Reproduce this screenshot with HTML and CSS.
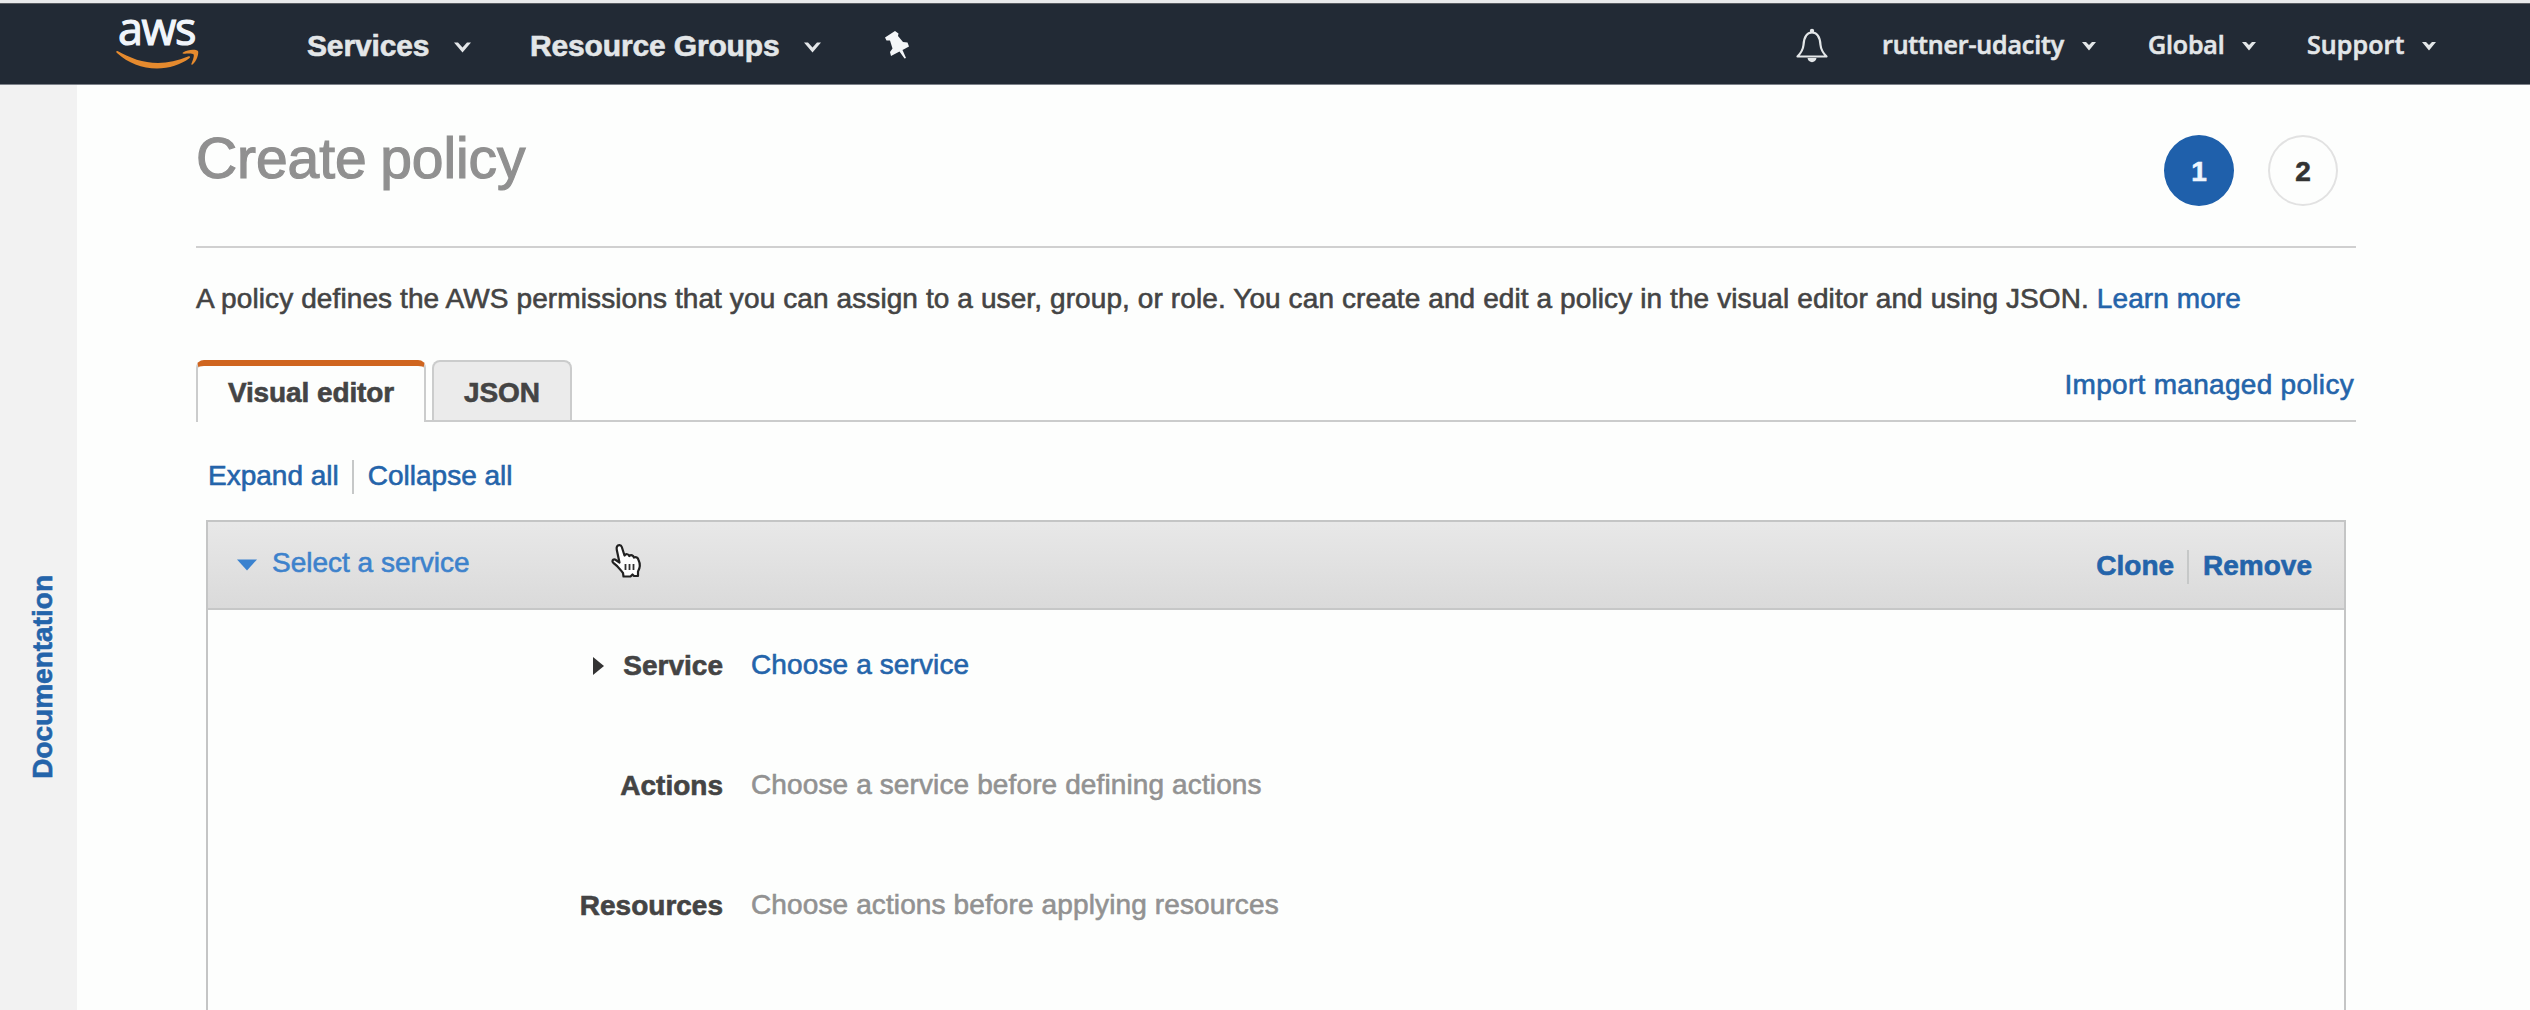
FILE: index.html
```html
<!DOCTYPE html>
<html lang="en">
<head>
<meta charset="utf-8">
<title>Create policy</title>
<link rel="stylesheet" href="styles.css">
</head>
<body>
<header class="topbar">
  <a class="logo">
    <span class="logo-text">aws</span>
    <svg class="smile" width="84" height="22" viewBox="0 0 84 22"><path d="M1.500 2C0 1.500 0 3 1 4C12 14 26 19.500 41 19.500C53 19.500 65 15.500 73 9.500C75 8 74 6.500 72 7.500C62 11.500 52 14 42 14C27 14 14 9 1.500 2Z"/><path d="M67 3.500C72 0 80 0 82 2C83 4 81 12 76.500 15.500C75.500 16 75 15.500 75.500 14.500C77 11 78.500 6.500 77.500 5.200C76.500 4 71 4.400 68 4.700C66.500 4.800 66 4.200 67 3.500Z"/></svg>
  </a>
  <nav class="nav-main">
    <a class="menu services">Services<svg class="chev" width="19" height="12" viewBox="0 0 19 12"><path d="M1 1.500H5L9.500 6.500L14 1.500H18L9.500 11.500Z"/></svg></a>
    <a class="menu groups">Resource Groups<svg class="chev" width="19" height="12" viewBox="0 0 19 12"><path d="M1 1.500H5L9.500 6.500L14 1.500H18L9.500 11.500Z"/></svg></a>
    <svg class="pin" width="26" height="30" viewBox="0 0 26 30"><path d="M1 7.500L11 1L14.500 3.500L14 6L19 12L23.500 12.500L25 16.500L18.500 20L22 28L20.500 28.500L15.500 21.500L7 26L6 22L8.500 18.500L6 10.500L2.500 10.500Z"/></svg>
  </nav>
  <nav class="nav-side">
    <svg class="bell" width="34" height="36" viewBox="0 0 34 36"><path class="bell-line" d="M2.500 28.500C6 25 8 22 8.500 17C9 9 11 4.500 17 4.500C23 4.500 25 9 25.500 17C26 22 28 25 31.500 28.500Z"/><circle cx="17" cy="3" r="2.200"/><path d="M12.500 30H21.500C21 35.500 13 35.500 12.500 30Z"/></svg>
    <a class="menu user">ruttner-udacity<svg class="tri" width="14" height="10" viewBox="0 0 14 10"><path d="M0 1H4L7 4L10 1H14L7 9.500Z"/></svg></a>
    <a class="menu region">Global<svg class="tri" width="14" height="10" viewBox="0 0 14 10"><path d="M0 1H4L7 4L10 1H14L7 9.500Z"/></svg></a>
    <a class="menu support">Support<svg class="tri" width="14" height="10" viewBox="0 0 14 10"><path d="M0 1H4L7 4L10 1H14L7 9.500Z"/></svg></a>
  </nav>
</header>
<div class="page">
  <aside class="docs"><a class="docs-link">Documentation</a></aside>
  <main class="content">
    <div class="heading">
      <h1>Create policy</h1>
      <ol class="steps"><li class="step current">1</li><li class="step">2</li></ol>
    </div>
    <p class="intro">A policy defines the AWS permissions that you can assign to a user, group, or role. You can create and edit a policy in the visual editor and using JSON. <a>Learn more</a></p>
    <div class="tabs">
      <a class="tab active">Visual editor</a>
      <a class="tab">JSON</a>
      <a class="import">Import managed policy</a>
    </div>
    <div class="tools"><a>Expand all</a><i class="sep"></i><a>Collapse all</a></div>
    <section class="panel">
      <div class="panel-head">
        <svg class="open" width="20" height="12" viewBox="0 0 20 12"><path d="M0 .5H20L10 11.500Z"/></svg>
        <a class="panel-title">Select a service</a>
        <div class="panel-actions"><a>Clone</a><i class="sep"></i><a>Remove</a></div>
        <svg class="cursor" width="34" height="36" viewBox="0 0 34 36"><path class="hand" d="M8 3.500C9 1.500 12 1.500 12.800 4L15.500 12.500C17 10.500 19.500 11 20.300 13C22 11.500 24.200 12.300 25 14.500C27 13.500 29 14.500 29.500 17C31.500 21 31 25 29 28.500V33H25L23.500 31.500L21.500 33.500H14.500L14 30C11.500 27 9 23 4.500 20C2.500 18.500 3.500 16 6 16.500L10.500 19.500L7.800 7C7.500 5.500 7.500 4.500 8 3.500Z"/><path class="fingers" d="M16.500 21V27M20.500 21V27M24.500 21V27"/></svg>
      </div>
      <dl class="fields">
        <dt><svg class="closed" width="11" height="18" viewBox="0 0 11 18"><path d="M0 0L11 9L0 18Z"/></svg>Service</dt><dd><a>Choose a service</a></dd>
        <dt>Actions</dt><dd>Choose a service before defining actions</dd>
        <dt>Resources</dt><dd>Choose actions before applying resources</dd>
      </dl>
    </section>
  </main>
</div>
</body>
</html>
```
FILE: styles.css
```css
* { box-sizing: border-box; }
body {
  margin: 0;
  height: 1010px;
  overflow: hidden;
  background: #fdfefd;
  color: #444;
  font: 28px/32px "Liberation Sans", Arial, sans-serif;
  -webkit-text-stroke: 0.6px currentColor;
}
a { color: #2464aa; }
h1, p, ol, dl, dd { margin: 0; padding: 0; }
svg { display: block; flex: none; }

.topbar {
  height: 85px;
  padding: 0 94px 0 116px;
  display: flex;
  background: #222a35;
  border-top: 3px solid #e9eaeb;
  border-bottom: 1px solid #7d828a;
  box-shadow: inset 0 1px #5a5d62;
}
.logo { width: 191px; padding-top: 4px; color: #f1f5fb; }
.logo-text {
  display: block;
  margin-left: 2px;
  height: 42px;
  font: 45px/42px "Open Sans", sans-serif;
  letter-spacing: -1.5px;
  -webkit-text-stroke: 1.2px currentColor;
}
.smile { fill: #e58a2e; }
.nav-main, .nav-side { display: flex; color: #e3e6e8; fill: #e3e6e8; }
.nav-main { font-size: 30px; font-weight: bold; letter-spacing: -0.15px; }
.nav-side {
  margin-left: auto;
  font-family: "Open Sans", sans-serif;
  font-size: 25px;
  font-weight: 600;
  letter-spacing: -0.15px;
}
.menu {
  display: flex;
  justify-content: space-between;
  align-items: flex-start;
  color: inherit;
  white-space: nowrap;
}
.nav-main .menu { padding-top: 27px; }
.nav-side .menu { padding-top: 25px; }
.services { width: 165px; margin-right: 58px; }
.groups { width: 292px; margin-right: 62px; }
.user { width: 214px; margin-right: 52px; }
.region { width: 108px; margin-right: 51px; }
.support { width: 129px; letter-spacing: 0.1px; }
.chev { margin-top: 11px; }
.tri { margin-top: 13px; }
.pin { margin-top: 27px; fill: #f4f6f8; }
.bell { margin: 25px 53px 0 0; }
.bell-line { fill: none; stroke: #e3e6e8; stroke-width: 2.2; stroke-linejoin: round; }

.page { display: flex; height: 925px; }
.docs {
  width: 77px;
  flex: none;
  background: #f2f2f2;
  display: flex;
  justify-content: center;
  align-items: flex-start;
  padding: 490px 0 0 9px;
}
.docs-link { writing-mode: vertical-rl; transform: rotate(180deg); font-weight: bold; }

.content { width: 2279px; padding: 41px 0 0 119px; }
.heading {
  height: 122px;
  border-bottom: 2px solid #d0d0d0;
  display: flex;
  justify-content: space-between;
}
h1 {
  font-size: 57px;
  line-height: 64px;
  font-weight: normal;
  letter-spacing: -0.1px;
  word-spacing: -2px;
  color: #909090;
  -webkit-text-stroke: 1.2px currentColor;
}
.steps { display: flex; gap: 34px; margin: 9px 18px 0 0; list-style: none; }
.step {
  width: 70px;
  height: 71px;
  border: 2px solid #e2e2e2;
  border-radius: 50%;
  text-align: center;
  line-height: 69px;
  font-weight: bold;
  color: #333;
}
.current { background: #1f60ab; border-color: #1f60ab; color: #eef6ff; }
.intro { margin-top: 35px; white-space: nowrap; letter-spacing: 0.1px; }

.tabs { display: flex; height: 62px; margin-top: 45px; border-bottom: 2px solid #cbcccc; }
.tab {
  height: 60px;
  width: 140px;
  padding-top: 15px;
  border: 2px solid #cbcccc;
  border-bottom: 0;
  border-radius: 8px 8px 0 0;
  background: #ebebeb;
  color: #444;
  font-weight: bold;
  text-align: center;
  letter-spacing: -0.1px;
}
.active {
  width: 230px;
  height: 62px;
  margin-right: 6px;
  padding-top: 11px;
  border-top: 6px solid #cf651f;
  background: #fdfefd;
}
.import { margin: 9px 2px 0 auto; letter-spacing: 0.3px; }
.tools { display: flex; margin: 38px 0 0 12px; }
.sep { width: 2px; height: 34px; margin: 0 14px 0 13px; background: #c6c8c8; }

.panel { margin: 26px 10px 0 10px; height: 490px; border: 2px solid #c4c5c5; border-bottom: 0; }
.panel-head {
  position: relative;
  height: 88px;
  padding: 0 32px 0 29px;
  display: flex;
  background: linear-gradient(#e8e8e8, #dadada);
  border-bottom: 2px solid #c6c7c7;
}
.open { margin-top: 37px; fill: #3a82cf; }
.panel-title { margin: 25px auto 0 15px; color: #3d82cc; }
.panel-actions { display: flex; padding-top: 28px; font-weight: bold; }
.cursor { position: absolute; left: 401px; top: 21px; }
.hand { fill: #fff; stroke: #222; stroke-width: 2.2; stroke-linejoin: round; }
.fingers { stroke: #333; stroke-width: 1.8; }
.fields {
  display: grid;
  grid-template-columns: 515px 1fr;
  grid-auto-rows: 120px;
  column-gap: 28px;
  padding-top: 39px;
}
dt { display: flex; justify-content: flex-end; gap: 19px; padding-top: 1px; font-weight: bold; }
.closed { margin-top: 7px; fill: #333; }
dd { color: #929292; letter-spacing: 0.12px; }
```
